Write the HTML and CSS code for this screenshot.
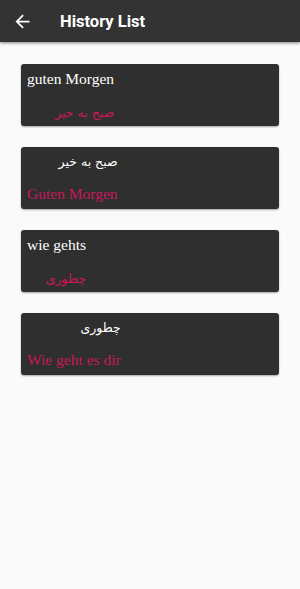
FILE: index.html
```html
<!DOCTYPE html>
<html lang="de">
<head>
    <meta charset="UTF-8">
    <meta name="viewport" content="width=device-width, initial-scale=1.0">
    <title>History List</title>
    <link rel="stylesheet" href="styles.css">
</head>
<body>
    <div class="app-bar">
        <svg class="back-icon" width="21" height="21" viewBox="0 0 24 24">
            <path d="M20 11H7.83l5.59-5.59L12 4l-8 8 8 8 1.41-1.41L7.83 13H20v-2z" fill="#ffffff"/>
        </svg>
        <div class="title">History List</div>
    </div>

    <div class="history-list">
        <div class="history-item">
            <div class="item-text">
                <div class="line latin white">guten Morgen</div>
                <div class="line farsi red gap-large">صبح به خیر</div>
            </div>
        </div>
        <div class="history-item">
            <div class="item-text">
                <div class="line farsi white">صبح به خیر</div>
                <div class="line latin red gap-small">Guten Morgen</div>
            </div>
        </div>
        <div class="history-item">
            <div class="item-text">
                <div class="line latin white">wie gehts</div>
                <div class="line farsi red gap-large">چطوری</div>
            </div>
        </div>
        <div class="history-item">
            <div class="item-text">
                <div class="line farsi white">چطوری</div>
                <div class="line latin red gap-small">Wie geht es dir</div>
            </div>
        </div>
    </div>
</body>
</html>
```

FILE: styles.css
```css
body {
    margin: 0;
    background-color: #fafafa;
    font-family: 'Roboto', 'DejaVu Sans', sans-serif;
}
.app-bar {
    height: 42px;
    background-color: #333333;
    display: flex;
    align-items: center;
    padding-left: 12px;
    box-shadow: 0 1px 3px rgba(0, 0, 0, 0.5);
}
.back-icon {
    margin-right: 27px;
}
.title {
    color: white;
    font-size: 16.5px;
    font-weight: bold;
}
.history-list {
    display: flex;
    flex-direction: column;
    gap: 21px;
    padding: 22px 21px;
}
.history-item {
    height: 62px;
    box-sizing: border-box;
    background-color: #2f2f2f;
    border-radius: 3px;
    padding: 4px 6px 2px 6px;
    box-shadow: 0 1px 2px rgba(0, 0, 0, 0.35);
}
.item-text {
    display: inline-flex;
    flex-direction: column;
}
.line {
    height: 22px;
    line-height: 22px;
    white-space: nowrap;
}
.latin {
    font-family: 'Liberation Serif', 'DejaVu Serif', serif;
    font-size: 15.5px;
}
.farsi {
    font-family: 'DejaVu Sans', sans-serif;
    font-size: 12.5px;
    direction: rtl;
    text-align: right;
}
.white {
    color: #ffffff;
}
.red {
    color: #c8185a;
}
.gap-large {
    margin-top: 12px;
}
.gap-small {
    margin-top: 10px;
}
```
